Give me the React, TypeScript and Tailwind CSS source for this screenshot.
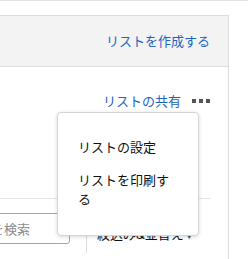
// List panel with open "more" menu

const FONT = "font-['Noto_Sans_CJK_JP','Noto_Sans',sans-serif]";

function Dots() {
  return (
    <div className="flex items-center gap-[3px]">
      <span className="h-1 w-1 bg-[#555]" />
      <span className="h-1 w-1 bg-[#555]" />
      <span className="h-1 w-1 bg-[#555]" />
    </div>
  );
}

function MoreMenu() {
  return (
    <div className="absolute left-[57px] top-[45px] w-[142px] rounded-[4px] border border-[#d5d5d5] bg-white pb-[20px] pl-5 pr-5 pt-[17px] shadow-[0_1px_4px_rgba(0,0,0,0.15)]">
      <div className="py-[7px] text-[13px] leading-[19px] text-[#111]">リストの設定</div>
      <div className="py-[7px] text-[13px] leading-[19px] text-[#111]">リストを印刷する</div>
    </div>
  );
}

export default function App() {
  return (
    <div className={`h-[259px] w-[248px] overflow-hidden border-t border-[#e2e2e2] bg-white ${FONT}`}>
      <div className="mt-[14px] w-[229px] border-r border-t border-[#dddddd]">
        {/* Header */}
        <div className="flex h-[51px] items-center justify-end border-b border-[#dddddd] bg-[#f3f3f3] pr-[18px]">
          <span className="text-[13px] text-[#1d63c0]">リストを作成する</span>
        </div>

        {/* Body */}
        <div className="relative h-[200px] pr-[18px]">
          <div className="flex items-center justify-end gap-[11px] pt-[24px]">
            <span className="text-[13px] leading-[19px] text-[#1d63c0]">リストの共有</span>
            <Dots />
          </div>

          <div className="mt-[88px] border-t border-[#e3e3e3]" />

          <div className="mt-[14px] flex items-stretch">
            <div className="-ml-[57px] flex h-[31px] w-[127px] items-center rounded-[3px] border border-[#a6a6a6] pl-2 text-[13px] text-[#8a8a8a]">
              リストを検索
            </div>
            <div className="ml-[16px] h-[40px] border-l border-[#dddddd]" />
            <div className="ml-[10px] mt-[12px] text-[13px] leading-[18px] text-[#111]">
              絞込み&amp;並替え<span className="text-[11px] text-[#555]">▼</span>
            </div>
          </div>

          <MoreMenu />
        </div>
      </div>
    </div>
  );
}
